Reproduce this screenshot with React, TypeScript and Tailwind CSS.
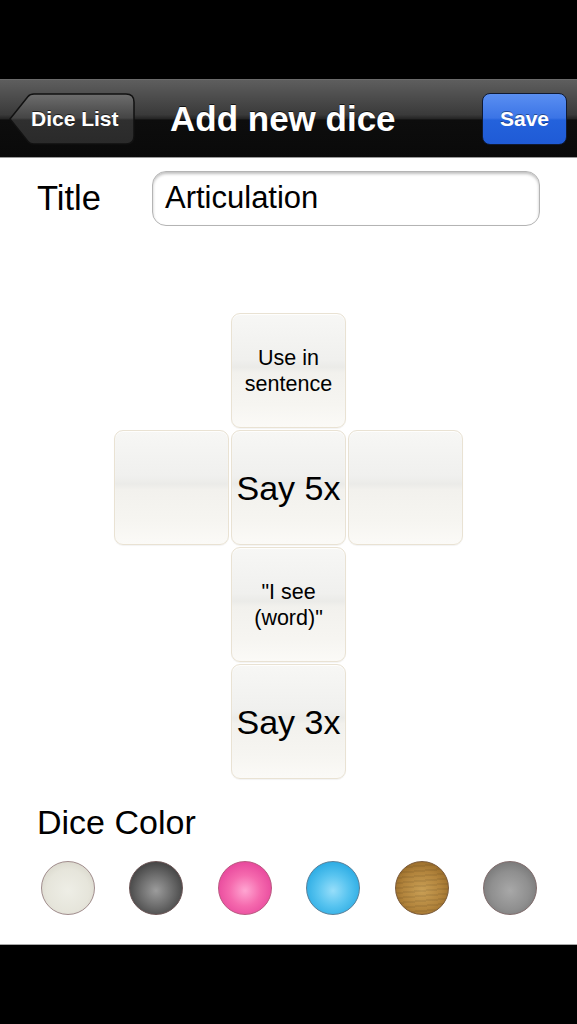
import React from "react";

const dieBase =
  "flex h-[115px] w-[115px] items-center justify-center rounded-[9px] border border-[#e9e2d3] bg-[linear-gradient(180deg,#f7f7f5_0%,#f0f0ee_40%,#ebebe8_47%,#f2f1ed_52%,#f6f5f1_80%,#fbfaf7_100%)] text-center text-black shadow-[inset_0_1px_1px_rgba(255,255,255,0.9),0_1px_1px_rgba(0,0,0,0.05)]";

function Die({ text, big, className = "" }: { text?: string; big?: boolean; className?: string }) {
  return (
    <div className={`${dieBase} ${className}`}>
      {text && (
        <span className={big ? "text-[34px] leading-[40px]" : "whitespace-pre-line text-[21.5px] leading-[26px]"}>
          {text}
        </span>
      )}
    </div>
  );
}

const colors = [
  "border-[#a08c8c] bg-[radial-gradient(circle_at_50%_55%,#eeeee6_0%,#e6e5db_55%,#d6d4c8_85%,#bdb9ad_100%)]",
  "border-[#6b5555] bg-[radial-gradient(circle_at_50%_55%,#9c9c9c_0%,#6e6e6e_40%,#3e3e3e_80%,#2c2c2c_100%)]",
  "border-[#b9587f] bg-[radial-gradient(circle_at_50%_55%,#ffa6d2_0%,#f56aae_40%,#e6439a_80%,#c63580_100%)]",
  "border-[#5a7f98] bg-[radial-gradient(circle_at_50%_55%,#97defa_0%,#58c4f0_40%,#25a8e2_80%,#1886c0_100%)]",
  "border-[#7a5a3a] bg-[repeating-linear-gradient(175deg,rgba(0,0,0,0.07)_0px,rgba(0,0,0,0.07)_2px,transparent_2px,transparent_5px),radial-gradient(circle_at_50%_55%,#c99f55_0%,#b2843c_50%,#946725_85%,#7c5620_100%)]",
  "border-[#7f6b6b] bg-[radial-gradient(circle_at_50%_55%,#a8a8a8_0%,#8f8f8f_50%,#727272_85%,#5e5e5e_100%)]",
];

export default function App() {
  return (
    <div className="flex h-[1024px] w-[577px] flex-col bg-black font-['Liberation_Sans',Arial,sans-serif]">
      <div className="h-[79px] bg-black" />

      {/* nav bar */}
      <div className="flex h-[79px] items-center border-t border-[#6a6a6a] border-b border-b-[#9a9a9a] bg-[linear-gradient(180deg,#5e5e5e_0%,#3a3a3a_45%,#262626_50%,#0d0d0d_52%,#0a0a0a_100%)] pl-[9px] pr-[10px]">
        <div className="relative flex h-[52px] w-[126px] items-center">
          <svg className="absolute inset-0" width="126" height="52" viewBox="0 0 126 52">
            <defs>
              <linearGradient id="bk" x1="0" y1="0" x2="0" y2="1">
                <stop offset="0" stopColor="#6e6e6e" />
                <stop offset="0.48" stopColor="#454545" />
                <stop offset="0.52" stopColor="#2f2f2f" />
                <stop offset="1" stopColor="#2a2a2a" />
              </linearGradient>
            </defs>
            <path
              d="M1 26 L19 3.5 Q21 1 25 1 L117 1 Q125 1 125 9 L125 43 Q125 51 117 51 L25 51 Q21 51 19 48.5 Z"
              fill="url(#bk)"
              stroke="#111"
              strokeWidth="1.5"
            />
          </svg>
          <span className="relative ml-[22px] text-[21px] font-bold text-white [text-shadow:0_-1px_0_rgba(0,0,0,0.6)]">
            Dice List
          </span>
        </div>

        <div className="ml-[35px] flex-1 text-[35px] font-bold leading-none text-white [text-shadow:0_-1px_0_rgba(0,0,0,0.7)]">
          Add new dice
        </div>

        <div className="flex h-[52px] w-[85px] items-center justify-center rounded-[8px] border border-[#0f1a33] bg-[linear-gradient(180deg,#5a8ff2_0%,#3b74e6_48%,#2462dc_52%,#1f5bd6_100%)] text-[21px] font-bold text-white [text-shadow:0_-1px_0_rgba(0,0,0,0.4)]">
          Save
        </div>
      </div>

      {/* body */}
      <div className="flex flex-1 flex-col bg-white">
        <div className="mt-[13px] flex items-center">
          <span className="ml-[37px] w-[115px] text-[34.5px] text-black">Title</span>
          <div className="flex h-[55px] w-[388px] items-center rounded-[14px] border border-[#b4b4b4] bg-white pl-[12px] text-[31px] text-black shadow-[inset_0_2px_3px_rgba(0,0,0,0.25)]">
            Articulation
          </div>
        </div>

        <div className="mx-auto mt-[87px] grid grid-cols-[115px_115px_115px] gap-[2px]">
          <div />
          <Die text={"Use in\nsentence"} />
          <div />
          <Die />
          <Die text="Say 5x" big />
          <Die />
          <div />
          <Die text={'"I see\n(word)"'} />
          <div />
          <div />
          <Die text="Say 3x" big />
          <div />
        </div>

        <div className="ml-[37px] mt-[23px] text-[34px] leading-[40px] text-black">Dice Color</div>

        <div className="mt-[19px] flex pl-[41px]">
          {colors.map((c, i) => (
            <div key={i} className={`mr-[34.4px] h-[54px] w-[54px] rounded-full border-[1.5px] ${c}`} />
          ))}
        </div>

        <div className="mt-auto h-px bg-[#a8a8a8]" />
      </div>

      <div className="h-[79px] bg-black" />
    </div>
  );
}
